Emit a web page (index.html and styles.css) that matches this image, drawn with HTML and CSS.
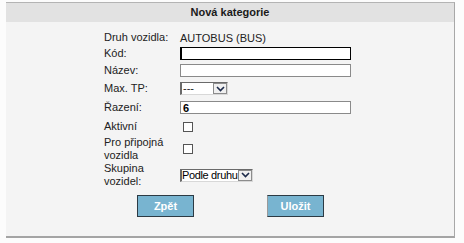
FILE: index.html
```html
<!DOCTYPE html>
<html lang="cs">
  <head>
    <meta charset="UTF-8" />
    <title>Nová kategorie</title>
    <link rel="stylesheet" href="styles.css">
  </head>
  <body>
    <div class="panel">
      <div class="panel-head">Nová kategorie</div>
      <div class="panel-body">
        <table class="form">
          <tr class="r1">
            <td class="lbl">Druh vozidla:</td>
            <td>AUTOBUS (BUS)</td>
          </tr>
          <tr class="r2">
            <td class="lbl">Kód:</td>
            <td><input type="text" class="txt focus" /></td>
          </tr>
          <tr class="r3">
            <td class="lbl">Název:</td>
            <td><input type="text" class="txt" /></td>
          </tr>
          <tr class="r4">
            <td class="lbl">Max. TP:</td>
            <td>
              <span class="sel sel-tp"><span class="sel-val">---</span><span class="sel-btn"><svg width="9" height="6" viewBox="0 0 9 6"><path d="M1 1 L4.5 4.5 L8 1" fill="none" stroke="#1c2a4a" stroke-width="1.6"/></svg></span></span>
            </td>
          </tr>
          <tr class="r5">
            <td class="lbl">Řazení:</td>
            <td><input type="text" class="txt bold" value="6" /></td>
          </tr>
          <tr class="r6">
            <td class="lbl">Aktivní</td>
            <td><span class="chk"></span></td>
          </tr>
          <tr class="r7">
            <td class="lbl">Pro připojná<br>vozidla</td>
            <td><span class="chk"></span></td>
          </tr>
          <tr class="r8">
            <td class="lbl">Skupina<br>vozidel:</td>
            <td>
              <span class="sel sel-grp"><span class="sel-val">Podle druhu</span><span class="sel-btn"><svg width="9" height="6" viewBox="0 0 9 6"><path d="M1 1 L4.5 4.5 L8 1" fill="none" stroke="#1c2a4a" stroke-width="1.6"/></svg></span></span>
            </td>
          </tr>
        </table>
        <div class="buttons">
          <button class="btn">Zpět</button>
          <button class="btn btn-save">Uložit</button>
        </div>
      </div>
    </div>
  </body>
</html>
```

FILE: styles.css
```css
html,
body {
  margin: 0;
  padding: 0;
  background-color: #fcfcfc;
  font-family: 'Liberation Sans', Arial, sans-serif;
  font-size: 11px;
  color: #222;
}

.panel {
  margin: 2px 0 0 6px;
  width: 448px;
  border-top: 1px solid #b4b4b4;
  border-right: 1px solid #a8a8a8;
  border-bottom: 2px solid #a4a4a4;
  background-color: #f4f4f4;
}

.panel-head {
  height: 19px;
  line-height: 19px;
  background-color: #e2e2e2;
  text-align: center;
  font-weight: bold;
  color: #1a1a1a;
}

.panel-body {
  height: 214px;
  padding-top: 8px;
  box-sizing: border-box;
}

.form {
  border-collapse: collapse;
  margin-left: 98px;
}

.form td {
  padding: 0;
  vertical-align: middle;
}

.form td.lbl {
  width: 76px;
  line-height: 13px;
}

.r1 { height: 15px; }
.r2 { height: 16px; }
.r3 { height: 18px; }
.r4 { height: 19px; }
.r5 { height: 19px; }
.r6 { height: 19px; }
.r7 { height: 24px; }
.r8 { height: 25px; }

.txt {
  display: block;
  width: 171px;
  height: 13px;
  box-sizing: border-box;
  margin: 0;
  padding: 0 2px;
  border: 1px solid #8a8a8a;
  background: #fff;
  font-family: inherit;
  font-size: 11px;
  outline: none;
}

.txt.focus {
  border-color: #000;
  border-left-width: 2px;
}

.txt.bold {
  font-weight: bold;
  color: #000;
}

.sel {
  display: flex;
  height: 13px;
  box-sizing: border-box;
  border-top: 1px solid #6a6a6a;
  border-left: 2px solid #6a6a6a;
  border-right: 1px solid #d8d8d8;
  border-bottom: 1px solid #d8d8d8;
  background: #fff;
  line-height: 11px;
}

.sel-tp { width: 48px; }
.sel-grp { width: 73px; color: #000; }

.sel-val {
  flex: 1;
  min-width: 0;
  padding-left: 1px;
  white-space: nowrap;
}

.sel-grp .sel-val {
  padding-left: 0;
  letter-spacing: -0.35px;
}

.sel-btn {
  flex: none;
  width: 14px;
  box-sizing: border-box;
  border: 1px solid #8c8c8c;
  background: #f0f0f0;
  display: flex;
  align-items: center;
  justify-content: center;
}

.chk {
  display: block;
  width: 10px;
  height: 10px;
  box-sizing: border-box;
  margin-left: 3px;
  border: 1px solid #555;
  background: #fff;
}

.buttons {
  display: flex;
  margin-top: 7px;
  padding-left: 131px;
  gap: 73px;
}

.btn {
  width: 57px;
  height: 22px;
  margin: 0;
  padding: 0;
  border: 1px solid #2c3a44;
  background-color: #78b4d0;
  color: #fff;
  font-family: inherit;
  font-size: 11px;
  font-weight: bold;
}

.btn-save {
  border-left-color: #9a9a9a;
}
```
